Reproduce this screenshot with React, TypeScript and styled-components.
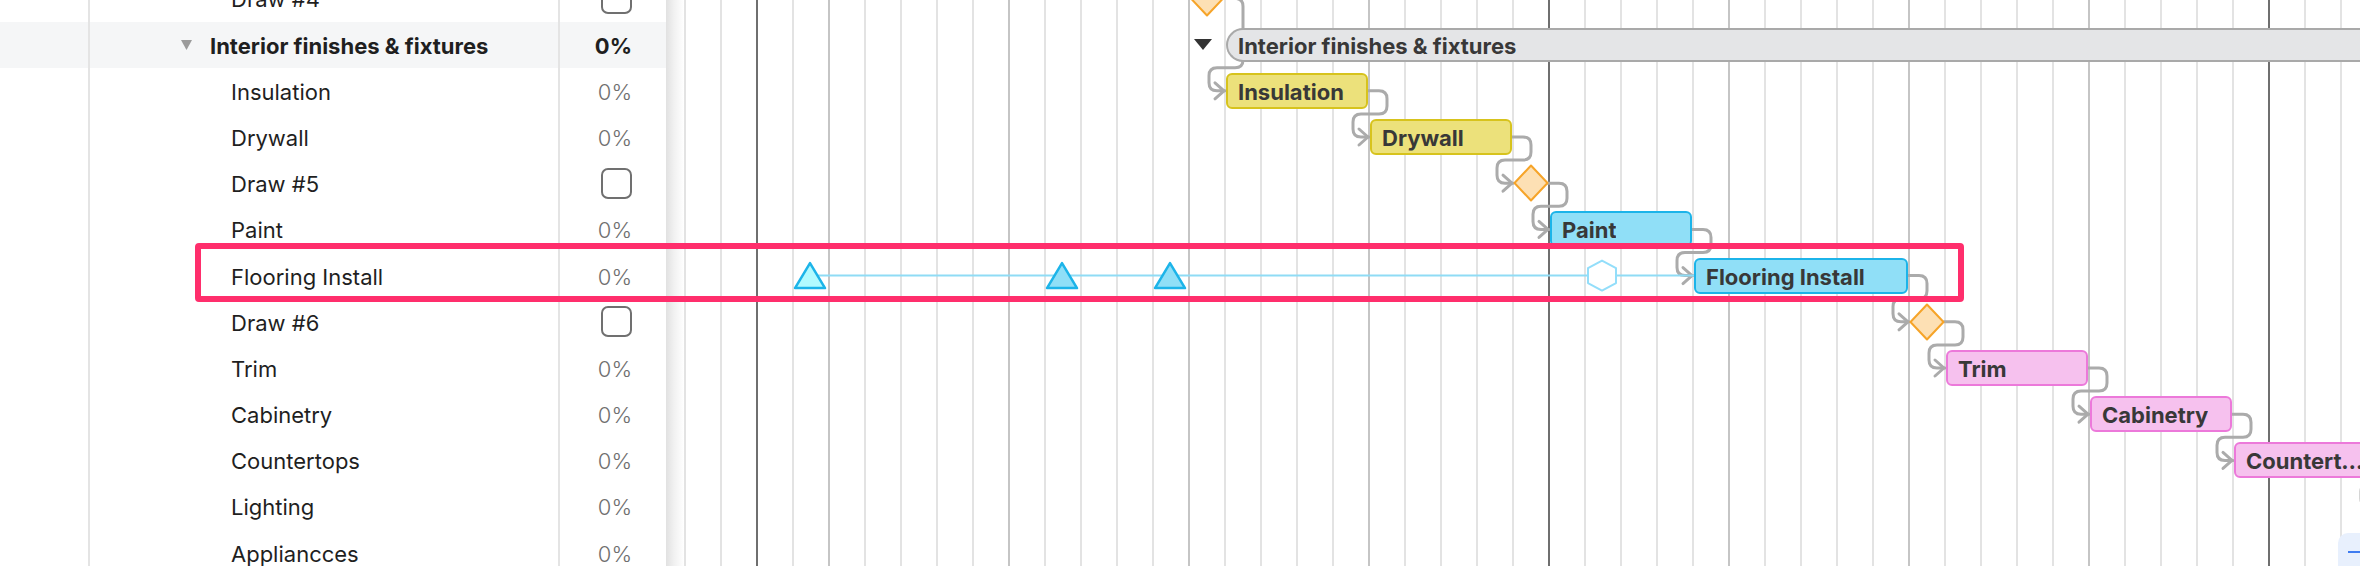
import React from "react";
import styled, { createGlobalStyle } from "styled-components";

const FONT = `Inter, "Open Sans", "Liberation Sans", sans-serif`;

const GlobalStyle = createGlobalStyle`
  *, *::before, *::after { box-sizing: border-box; }
  html, body { margin: 0; padding: 0; background: #ffffff; }
  body { font-family: ${FONT}; }
`;

const ROW_H = 46.2;
const SCROLL_Y = 24.7;
const COL_W = 36;
const DAY_COLS = 48;

/* chart-local x of the grid line that opens day k */
const dayX = (k: number) => 72 + COL_W * k;
/* vertical centre of row r (page coordinates) */
const rowY = (r: number) => -SCROLL_Y + ROW_H * r + ROW_H / 2;

type RowKind = "task" | "parent" | "milestone";
type Row = { name: string; kind: RowKind };

const rows: Row[] = [
  { name: "Draw #4", kind: "milestone" },
  { name: "Interior finishes & fixtures", kind: "parent" },
  { name: "Insulation", kind: "task" },
  { name: "Drywall", kind: "task" },
  { name: "Draw #5", kind: "milestone" },
  { name: "Paint", kind: "task" },
  { name: "Flooring Install", kind: "task" },
  { name: "Draw #6", kind: "milestone" },
  { name: "Trim", kind: "task" },
  { name: "Cabinetry", kind: "task" },
  { name: "Countertops", kind: "task" },
  { name: "Lighting", kind: "task" },
  { name: "Appliancces", kind: "task" },
];

type Tone = "yellow" | "blue" | "pink";
const tones: Record<Tone, { fill: string; line: string }> = {
  yellow: { fill: "#ece17b", line: "#d7c31d" },
  blue: { fill: "#90dff7", line: "#1cb4e9" },
  pink: { fill: "#f6c1ee", line: "#ec79da" },
};

type Bar = { label: string; row: number; from: number; to: number; tone: Tone; labelMax?: number };
const bars: Bar[] = [
  { label: "Insulation", row: 2, from: 13, to: 17, tone: "yellow" },
  { label: "Drywall", row: 3, from: 17, to: 21, tone: "yellow" },
  { label: "Paint", row: 5, from: 22, to: 26, tone: "blue" },
  { label: "Flooring Install", row: 6, from: 26, to: 32, tone: "blue" },
  { label: "Trim", row: 8, from: 33, to: 37, tone: "pink" },
  { label: "Cabinetry", row: 9, from: 37, to: 41, tone: "pink" },
  { label: "Countertops", row: 10, from: 41, to: 45, tone: "pink", labelMax: 119 },
];

const milestones = [
  { row: 0, day: 12 },
  { row: 4, day: 21 },
  { row: 7, day: 32 },
];

const links = [
  { from: 13, fromRow: 0, to: 13, toRow: 2 },
  { from: 17, fromRow: 2, to: 17, toRow: 3 },
  { from: 21, fromRow: 3, to: 21, toRow: 4 },
  { from: 22, fromRow: 4, to: 22, toRow: 5 },
  { from: 26, fromRow: 5, to: 26, toRow: 6 },
  { from: 32, fromRow: 6, to: 32, toRow: 7 },
  { from: 33, fromRow: 7, to: 33, toRow: 8 },
  { from: 37, fromRow: 8, to: 37, toRow: 9 },
  { from: 41, fromRow: 9, to: 41, toRow: 10 },
  { from: 45, fromRow: 10, to: 45, toRow: 11 },
];

type LineKind = "light" | "week" | "month";
const lineKind = (k: number): LineKind => {
  if (k === 0 || k === 22 || k === 42) return "month";
  if ((((k - 2) % 5) + 5) % 5 === 0) return "week";
  return "light";
};

function linkPath(x1: number, y1: number, x2: number, y2: number) {
  const r = 8;
  const xr = x1 + 19;
  const xl = x2 - 17;
  const ym = y2 - ROW_H / 2;
  return `M ${x1} ${y1} H ${xr - r} Q ${xr} ${y1} ${xr} ${y1 + r} V ${ym - r} Q ${xr} ${ym} ${xr - r} ${ym} H ${xl + r} Q ${xl} ${ym} ${xl} ${ym + r} V ${y2 - r} Q ${xl} ${y2} ${xl + r} ${y2} H ${x2 - 1}`;
}
const arrowPath = (x: number, y: number) => `M ${x - 11} ${y - 8} L ${x - 2} ${y} L ${x - 11} ${y + 8}`;

const triPoints = (cx: number, cy: number) =>
  `${cx},${cy - 12.5} ${cx + 15},${cy + 12.5} ${cx - 15},${cy + 12.5}`;
const hexPoints = (cx: number, cy: number) => {
  const w = 14;
  const h = 15;
  return `${cx},${cy - h} ${cx + w},${cy - h / 2} ${cx + w},${cy + h / 2} ${cx},${cy + h} ${cx - w},${cy + h / 2} ${cx - w},${cy - h / 2}`;
};

/* ---------- layout ---------- */

const Root = styled.div`
  position: relative;
  width: 2360px;
  height: 566px;
  overflow: hidden;
  display: flex;
  background: #ffffff;
  font-family: ${FONT};
`;

const Panel = styled.div`
  flex: none;
  width: 666px;
  height: 100%;
  overflow: hidden;
  background: #ffffff;
`;

const PanelList = styled.div`
  display: flex;
  flex-direction: column;
  margin-top: -${SCROLL_Y}px;
`;

const PanelRow = styled.div<{ $parent?: boolean }>`
  flex: none;
  height: ${ROW_H}px;
  display: grid;
  grid-template-columns: 90px 470px 1fr;
  background: ${(p) => (p.$parent ? "#f5f6f7" : "#ffffff")};
`;

const IndexCell = styled.div`
  border-right: 2px solid #e4e4e4;
`;

const NameCell = styled.div<{ $parent?: boolean }>`
  display: flex;
  align-items: center;
  gap: 18px;
  padding-left: ${(p) => (p.$parent ? 91 : 141)}px;
  padding-top: 2px;
  border-right: 2px solid #e4e4e4;
  font-size: 22px;
  font-weight: ${(p) => (p.$parent ? 700 : 400)};
  color: #1f1f1f;
  white-space: nowrap;
`;

const ValueCell = styled.div<{ $parent?: boolean }>`
  display: flex;
  align-items: center;
  justify-content: flex-end;
  padding-right: 34px;
  padding-top: 2px;
  font-size: 22px;
  font-weight: ${(p) => (p.$parent ? 700 : 300)};
  color: ${(p) => (p.$parent ? "#1f1f1f" : "#6f6f6f")};
`;

const CheckBox = styled.span`
  display: block;
  width: 31px;
  height: 31px;
  margin-top: -2px;
  border: 2px solid #707070;
  border-radius: 7px;
  background: #ffffff;
`;

const Gutter = styled.div`
  flex: none;
  width: 18px;
  height: 100%;
  background: linear-gradient(90deg, #e1e1e1 0%, #f1f1f1 45%, #ffffff 100%);
`;

const Chart = styled.div`
  position: relative;
  flex: 1;
  height: 100%;
  overflow: hidden;
`;

const ChartGrid = styled.div`
  display: grid;
  grid-template-columns: repeat(${DAY_COLS}, ${COL_W}px);
  grid-template-rows: repeat(${rows.length}, ${ROW_H}px);
  margin-top: -${SCROLL_Y}px;
`;

const lineColors: Record<LineKind, string> = {
  light: "#e3e3e3",
  week: "#c5c5c5",
  month: "#6f6f6f",
};

const DayLine = styled.div<{ $col: number; $kind: LineKind }>`
  grid-column: ${(p) => p.$col};
  grid-row: 1 / -1;
  border-left: 2px solid ${(p) => lineColors[p.$kind]};
`;

const TaskBar = styled.div<{ $from: number; $to: number; $row: number; $tone: Tone }>`
  grid-column: ${(p) => p.$from + 3} / ${(p) => p.$to + 3};
  grid-row: ${(p) => p.$row + 1};
  align-self: center;
  position: relative;
  z-index: 2;
  height: 36px;
  margin-left: 2px;
  display: flex;
  align-items: center;
  padding: 2px 10px 0;
  border: 2px solid ${(p) => tones[p.$tone].line};
  border-radius: 6px;
  background: ${(p) => tones[p.$tone].fill};
  overflow: hidden;
`;

const BarLabel = styled.span<{ $max?: number }>`
  display: block;
  max-width: ${(p) => (p.$max ? `${p.$max}px` : "none")};
  overflow: hidden;
  text-overflow: ellipsis;
  white-space: nowrap;
  font-size: 22px;
  font-weight: 700;
  color: #383838;
`;

const SummaryBar = styled.div`
  grid-column: 16 / -1;
  grid-row: 2;
  align-self: center;
  position: relative;
  z-index: 2;
  height: 34px;
  margin-left: 2px;
  display: flex;
  align-items: center;
  padding: 2px 0 0 10px;
  border: 2px solid #a9a9a9;
  border-right: none;
  border-radius: 17px 0 0 17px;
  background: #e4e5e7;
  font-size: 22px;
  font-weight: 700;
  color: #383838;
  white-space: nowrap;
`;

const Toggle = styled.svg`
  grid-column: 15;
  grid-row: 2;
  align-self: center;
  justify-self: start;
  margin-left: 6px;
  position: relative;
  z-index: 2;
`;

const Milestone = styled.svg<{ $day: number; $row: number }>`
  grid-column: ${(p) => p.$day + 3};
  grid-row: ${(p) => p.$row + 1};
  align-self: center;
  justify-self: start;
  margin-left: 1px;
  position: relative;
  z-index: 2;
`;

const Overlay = styled.svg`
  position: absolute;
  left: 0;
  top: 0;
  width: 100%;
  height: 100%;
  z-index: 1;
  pointer-events: none;
`;

const ZoomControl = styled.div`
  position: absolute;
  right: -20px;
  bottom: -10px;
  width: 42px;
  height: 43px;
  z-index: 3;
  border-radius: 10px;
  background: #e8f0fd;
`;

const ZoomGlyph = styled.svg`
  display: block;
  margin: 9px 0 0 10px;
`;

const Highlight = styled.div`
  position: absolute;
  left: 195px;
  top: 243px;
  width: 1769px;
  height: 59px;
  z-index: 5;
  border: 6px solid #ff2e6c;
  border-radius: 4px;
  pointer-events: none;
`;

const Caret = styled.svg`
  flex: none;
  margin-top: -2px;
`;

const PanelCaret = () => (
  <Caret width="11" height="10" viewBox="0 0 11 10">
    <polygon points="0,0 11,0 5.5,10" fill="#9b9b9b" />
  </Caret>
);

export default function App() {
  const baseY = rowY(6);
  const baseStart = dayX(1) + 18;
  const baseEnd = dayX(26) + 2;
  return (
    <>
      <GlobalStyle />
      <Root>
        <Panel>
          <PanelList>
            {rows.map((r) => (
              <PanelRow key={r.name} $parent={r.kind === "parent"}>
                <IndexCell />
                <NameCell $parent={r.kind === "parent"}>
                  {r.kind === "parent" && <PanelCaret />}
                  <span>{r.name}</span>
                </NameCell>
                <ValueCell $parent={r.kind === "parent"}>
                  {r.kind === "milestone" ? <CheckBox /> : "0%"}
                </ValueCell>
              </PanelRow>
            ))}
          </PanelList>
        </Panel>
        <Gutter />
        <Chart>
          <ChartGrid>
            {Array.from({ length: DAY_COLS }, (_, j) => (
              <DayLine key={j} $col={j + 1} $kind={lineKind(j - 2)} />
            ))}
            <Toggle width="18" height="11" viewBox="0 0 18 11">
              <polygon points="0,0 18,0 9,11" fill="#333333" />
            </Toggle>
            <SummaryBar>Interior finishes &amp; fixtures</SummaryBar>
            {milestones.map((m) => (
              <Milestone key={m.row} $day={m.day} $row={m.row} width="36" height="38" viewBox="0 0 36 38">
                <polygon
                  points="18,1.5 34.5,19 18,36.5 1.5,19"
                  fill="#fde0b4"
                  stroke="#f6a429"
                  strokeWidth="2"
                  strokeLinejoin="round"
                />
              </Milestone>
            ))}
            {bars.map((b) => (
              <TaskBar key={b.label} $from={b.from} $to={b.to} $row={b.row} $tone={b.tone}>
                <BarLabel $max={b.labelMax}>{b.label}</BarLabel>
              </TaskBar>
            ))}
          </ChartGrid>
          <Overlay>
            {links.map((l, i) => {
              const x1 = dayX(l.from);
              const y1 = rowY(l.fromRow);
              const x2 = dayX(l.to) + 2;
              const y2 = rowY(l.toRow);
              return (
                <g key={i} fill="none" stroke="#ababab" strokeWidth="3" strokeLinecap="round" strokeLinejoin="round">
                  <path d={linkPath(x1, y1, x2, y2)} />
                  <path d={arrowPath(x2, y2)} />
                </g>
              );
            })}
            <line x1={baseStart} y1={baseY} x2={baseEnd} y2={baseY} stroke="#8fdcf5" strokeWidth="2" />
            <polygon
              points={triPoints(dayX(1) + 18, baseY)}
              fill="#b2fbff"
              stroke="#1cb4e9"
              strokeWidth="2.5"
              strokeLinejoin="round"
            />
            <polygon
              points={triPoints(dayX(8) + 18, baseY)}
              fill="#8fdff7"
              stroke="#1cb4e9"
              strokeWidth="2.5"
              strokeLinejoin="round"
            />
            <polygon
              points={triPoints(dayX(11) + 18, baseY)}
              fill="#8fdff7"
              stroke="#1cb4e9"
              strokeWidth="2.5"
              strokeLinejoin="round"
            />
            <polygon
              points={hexPoints(dayX(23) + 18, baseY)}
              fill="#ffffff"
              stroke="#93defa"
              strokeWidth="2"
              strokeLinejoin="round"
            />
          </Overlay>
          <ZoomControl>
            <ZoomGlyph width="20" height="20" viewBox="0 0 20 20">
              <path d="M0 10 H16" stroke="#3f7cf0" strokeWidth="2" fill="none" />
            </ZoomGlyph>
          </ZoomControl>
        </Chart>
        <Highlight />
      </Root>
    </>
  );
}
